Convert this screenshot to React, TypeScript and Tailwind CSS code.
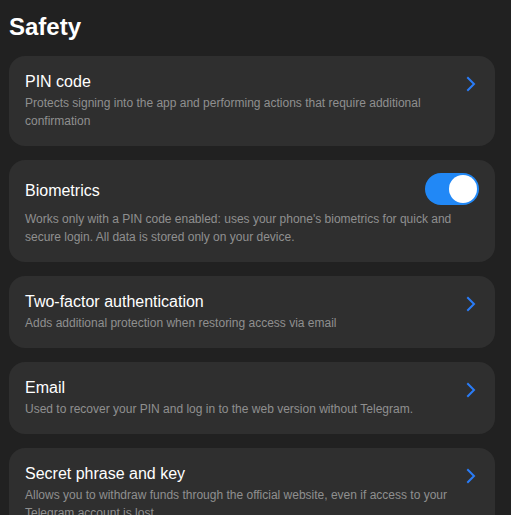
import React, { useState } from 'react';

type Item = {
  title: string;
  text: string;
  toggle?: boolean;
};

const items: Item[] = [
  {
    title: 'PIN code',
    text: 'Protects signing into the app and performing actions that require additional confirmation',
  },
  {
    title: 'Biometrics',
    text: "Works only with a PIN code enabled: uses your phone's biometrics for quick and secure login. All data is stored only on your device.",
    toggle: true,
  },
  {
    title: 'Two-factor authentication',
    text: 'Adds additional protection when restoring access via email',
  },
  {
    title: 'Email',
    text: 'Used to recover your PIN and log in to the web version without Telegram.',
  },
  {
    title: 'Secret phrase and key',
    text: 'Allows you to withdraw funds through the official website, even if access to your Telegram account is lost',
  },
];

function Chevron() {
  return (
    <svg width="14" height="16" viewBox="0 0 14 16" className="mt-1 mr-px shrink-0">
      <path d="M4 2 L10 8 L4 14" fill="none" stroke="#2a7cf7" strokeWidth="2" strokeLinecap="square" strokeLinejoin="miter" />
    </svg>
  );
}

function Toggle({ on, onChange }: { on: boolean; onChange: () => void }) {
  return (
    <button
      onClick={onChange}
      className={`relative w-[54px] h-8 rounded-full shrink-0 ${on ? 'bg-[#2188f6]' : 'bg-[#555]'}`}
    >
      <span
        className={`absolute top-[2px] w-7 h-7 rounded-full bg-white ${on ? 'right-[2px]' : 'left-[2px]'}`}
      />
    </button>
  );
}

function Card({ item }: { item: Item }) {
  const [on, setOn] = useState(true);

  if (item.toggle) {
    return (
      <div className="bg-[#2f2f2f] rounded-2xl px-4 pt-[13px] pb-4">
        <div className="flex items-start justify-between h-8">
          <div className="mt-2 text-base leading-5 text-white">{item.title}</div>
          <Toggle on={on} onChange={() => setOn(!on)} />
        </div>
        <p className="mt-[5px] text-xs leading-[18px] text-[#8f8f8f]">{item.text}</p>
      </div>
    );
  }

  return (
    <div className="bg-[#2f2f2f] rounded-2xl px-4 py-4">
      <div className="flex items-start justify-between">
        <div className="text-base leading-5 text-white">{item.title}</div>
        <Chevron />
      </div>
      <p className="mt-0.5 text-xs leading-[18px] text-[#8f8f8f]">{item.text}</p>
    </div>
  );
}

export default function App() {
  return (
    <div
      className="min-h-screen h-[515px] overflow-hidden bg-[#212121] pl-[9px] pr-4"
      style={{ fontFamily: '"Liberation Sans", Arial, sans-serif' }}
    >
      <h1 className="pt-[11px] text-2xl leading-8 font-bold text-white">Safety</h1>
      <div className="mt-[13px] flex flex-col gap-[14px]">
        {items.map((item) => (
          <Card key={item.title} item={item} />
        ))}
      </div>
    </div>
  );
}
